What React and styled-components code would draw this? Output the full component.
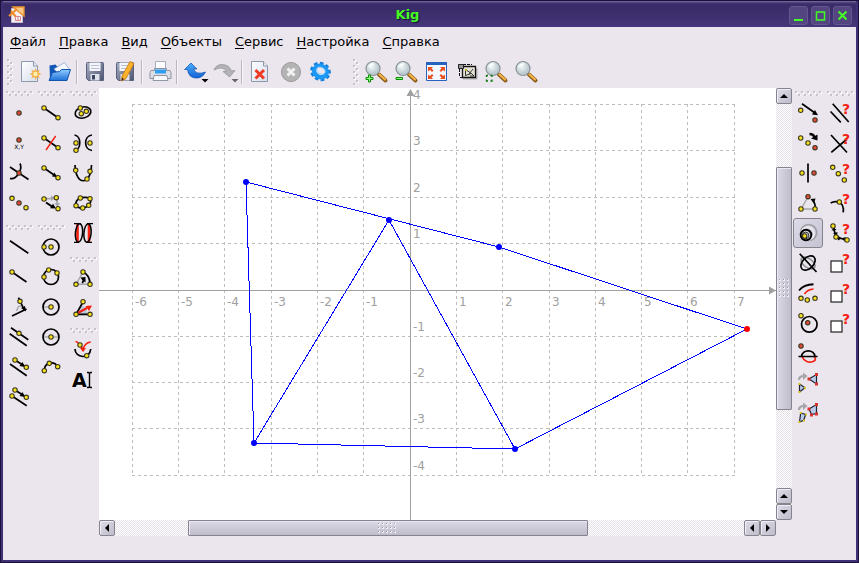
import styled, { createGlobalStyle, css } from "styled-components";

const GlobalStyle = createGlobalStyle`
  * {
    box-sizing: border-box;
  }

  body {
    margin: 0;
    background: #1c1038;
    font-family: "DejaVu Sans", Verdana, sans-serif;
    font-size: 13px;
    color: #000;
  }

  button {
    font: inherit;
    color: inherit;
    padding: 0;
    border: none;
    background: none;
  }
`;

const Window = styled.div`
  min-height: 100vh;
  display: flex;
  flex-direction: column;
  background: #ebe6ed;
  border: 3px solid #3f3176;
  border-top: none;
  outline: 1px solid #1c1038;
  outline-offset: -1px;
`;

const TitleBar = styled.header`
  height: 27px;
  flex: none;
  display: flex;
  align-items: center;
  padding: 2px 4px 0 5px;
  border-top: 1px solid #1c1038;
  background: linear-gradient(#8478ac 0, #574a86 1px, #3a2c68 3px, #3a2c68 8px, #45377b 100%);
`;

const Title = styled.h1`
  flex: 1;
  margin: 0;
  text-align: center;
  font-size: 13px;
  line-height: 20px;
  color: #44ff22;
  text-shadow: 1px 1px 1px #1c1038;
`;

const WindowButtons = styled.div`
  display: flex;
  gap: 3px;
`;

const WindowButton = styled.button`
  width: 19px;
  height: 19px;
  display: flex;
  border-radius: 3px;
  background: #534580;
  border: 1px solid #64578f;
`;

const MenuBar = styled.nav`
  height: 29px;
  flex: none;
  display: flex;
  align-items: center;
  gap: 1px;
  padding-left: 1px;
`;

const MenuItem = styled.button`
  padding: 0 6px;
  line-height: 20px;

  u {
    text-underline-offset: 2px;
    text-decoration-thickness: 1px;
  }
`;

const Toolbar = styled.div`
  height: 32px;
  flex: none;
  display: flex;
  align-items: center;
`;

const bumps = css`
  background-image: conic-gradient(from 0deg at 2px 2px, transparent 75%, #c6c2c9 0),
    conic-gradient(from 0deg at 2px 2px, transparent 75%, #c6c2c9 0),
    conic-gradient(from 0deg at 2px 2px, transparent 75%, #fff 0),
    conic-gradient(from 0deg at 2px 2px, transparent 75%, #fff 0);
  background-size: 6px 6px;
  background-position: 0 0, 3px 3px, 1px 1px, 4px 4px;
`;

const VerticalHandle = styled.div`
  width: 6px;
  height: 26px;
  margin: 0 2px 0 ${(props) => (props.$spaced ? "18px" : "4px")};
  ${bumps}
`;

const HorizontalHandle = styled.div`
  width: 27px;
  height: 5px;
  margin: 3px 0 2px 3px;
  ${bumps}
`;

const Separator = styled.div`
  width: 2px;
  height: 24px;
  margin: 0 2px 0 1px;
  border-left: 1px solid #b9b6bf;
  border-right: 1px solid #f8f6fa;
`;

const ActionButton = styled.button`
  width: 30px;
  height: 30px;
  display: flex;
  align-items: center;
  justify-content: center;
`;

const Workspace = styled.main`
  flex: 1;
  display: flex;
  padding-bottom: 24px;
`;

const Palette = styled.div`
  width: 32px;
  flex: none;
`;

const ToolGroup = styled.div`
  display: flex;
  flex-direction: column;

  &:not(:first-child) {
    padding-top: ${(props) => props.$gap || 4}px;
  }
`;

const ToolButton = styled.button`
  width: 30px;
  height: 30px;
  margin-left: 1px;
  display: flex;
  align-items: center;
  justify-content: center;
  border-radius: 3px;

  ${(props) =>
    props.$active &&
    css`
      border: 1px solid #85838d;
      background: linear-gradient(135deg, #dddbe8, #c5c3d2);
    `}
`;

const View = styled.div`
  flex: 1;
  min-width: 0;
  display: grid;
  grid-template-columns: 1fr 16px;
  grid-template-rows: 1fr 16px;
`;

const Drawing = styled.svg`
  display: block;
  width: 100%;
  height: 100%;
  background: #fff;
  font-size: 12px;
`;

const ScrollBar = styled.div`
  display: flex;
  flex-direction: ${(props) => (props.$vertical ? "column" : "row")};
  background: repeating-conic-gradient(#fff 0 25%, #e6e1e8 0 50%) 0 0 / 2px 2px;
`;

const ScrollSpace = styled.div`
  flex: ${(props) => props.$size} 1 0;
`;

const ScrollThumb = styled.div`
  flex: ${(props) => props.$size} 1 0;
  display: flex;
  align-items: center;
  justify-content: center;
  border: 1px solid #85838d;
  border-radius: 1px;
  box-shadow: inset 1px 1px #eae8f2;
  background: linear-gradient(${(props) => (props.$vertical ? "to right" : "to bottom")}, #dcdae6, #bfbccb);
`;

const Grip = styled.div`
  width: ${(props) => (props.$vertical ? 11 : 19)}px;
  height: ${(props) => (props.$vertical ? 19 : 11)}px;
  background: conic-gradient(from 0deg at 1px 1px, transparent 75%, #9c9aa6 0) 0 0 / 4px 4px,
    conic-gradient(from 0deg at 2px 2px, transparent 75%, #f0eff6 0) 0 0 / 4px 4px;
`;

const ScrollButton = styled.button`
  width: 16px;
  height: 16px;
  flex: none;
  display: flex;
  border: 1px solid #85838d;
  border-radius: 2px;
  box-shadow: inset 1px 1px #f0eef6;
  background: linear-gradient(135deg, #dedce8, #bfbccb);
`;

const RED = "#e0483a";
const YELLOW = "#f7e21c";

const Dot = ({ x, y, red }) => (
  <circle cx={x} cy={y} r="2.2" fill={red ? RED : YELLOW} stroke="#3b3820" strokeWidth="1.1" />
);

const Line = ({ d, color = "#000", w = 1.7 }) => (
  <path d={d} fill="none" stroke={color} strokeWidth={w} />
);

const Question = () => (
  <text x="14" y="13" fontSize="14" fontWeight="bold" fill="#f5200f">
    ?
  </text>
);

const toolIcons = {
  point: <Dot x={12} y={12} red />,
  coordinates: (
    <>
      <Dot x={12} y={9} red />
      <text x="12" y="18" fontSize="6" textAnchor="middle">
        X,Y
      </text>
    </>
  ),
  intersection: (
    <>
      <Line d="M3 6l18.5 12.5M13 2.5c1.5 3 1 6-1 9.5s-5 6.5-9 5.5" />
      <Dot x={12} y={12} red />
    </>
  ),
  midpoint: (
    <>
      <Dot x={5} y={7.3} />
      <Dot x={12} y={12} red />
      <Dot x={19} y={16.7} />
    </>
  ),
  segment: (
    <>
      <Line d="M5 7l14 9.7" />
      <Dot x={5} y={7} />
      <Dot x={19} y={16.7} />
    </>
  ),
  bisector: (
    <>
      <Line d="M5 7l14 9.7" />
      <Line d="M16.7 5L7 19" color="#f5200f" w={1.4} />
      <Dot x={5} y={7} />
      <Dot x={19} y={16.7} />
    </>
  ),
  vector: (
    <>
      <Line d="M5 7l14 9.7" />
      <path d="M18 16l-5-.5 2.500-4z" />
      <Dot x={5} y={7} />
      <Dot x={19} y={16.7} />
    </>
  ),
  vectorSum: (
    <>
      <Line d="M5 8l8-.6M17.500 7l1 7" color="#a5a5ab" />
      <path d="M12 4.500l4 2.500-4 3zM15.500 12h5.500l-2.500 4z" fill="#a5a5ab" />
      <Line d="M7 11.500l6 4" w={2} />
      <path d="M17 17.500l-6-.3 3-4.500z" />
      <Dot x={5} y={8} />
      <Dot x={17.3} y={6.7} />
      <Dot x={19} y={17.7} />
    </>
  ),
  ellipse: (
    <>
      <ellipse cx="12" cy="11.5" rx="8" ry="5.5" transform="rotate(-16 12 11.5)" fill="none" stroke="#000" strokeWidth="1.7" />
      <Dot x={9.3} y={7} />
      <Dot x={10.3} y={12.7} />
      <Dot x={15.3} y={10.3} />
    </>
  ),
  hyperbola: (
    <>
      <Line d="M3.500 4c7 1 7 14.500 0 15.500M21 4c-8.500 1-8.500 14.500 0 15.500" />
      <Dot x={5} y={12} />
      <Dot x={19} y={12} />
      <Dot x={5} y={19.3} />
    </>
  ),
  parabola: (
    <>
      <Line d="M4 4c.5 21 16 21 16.500 0" />
      <Dot x={4.7} y={9.3} />
      <Dot x={19} y={10.3} />
      <Dot x={16} y={18} />
    </>
  ),
  conic: (
    <>
      <Line d="M9.300 7c3-1 8-1 9.700.7 1.500 2 0 5-1.300 6.600-2 1.700-4 2.700-6 2.700-3 0-6 0-7-2.300C4 12 6 8 9.300 7z" />
      <Dot x={9.3} y={7} />
      <Dot x={19} y={7.7} />
      <Dot x={5} y={14.7} />
      <Dot x={11.7} y={17} />
      <Dot x={17.7} y={14.3} />
    </>
  ),
  cubic: (
    <>
      <Line d="M6.500 3v18M18 3v18" color="#f5200f" w={2.6} />
      <ellipse cx="8" cy="12" rx="3.6" ry="9.3" transform="rotate(5 8 12)" fill="none" stroke="#000" strokeWidth="1.5" />
      <ellipse cx="16.5" cy="12" rx="3.6" ry="9.3" transform="rotate(5 16.5 12)" fill="none" stroke="#000" strokeWidth="1.5" />
      <Line d="M3 2.700h7M16 2.700h6M3 21.300h5M15 21.300h6" w={1.3} />
    </>
  ),
  line: <Line d="M3 5.700l18.300 12.600" />,
  ray: (
    <>
      <Line d="M5 7l14.500 10" />
      <Dot x={5} y={7} />
    </>
  ),
  perpendicular: (
    <>
      <Line d="M9.500 16l2-4.500 4-1" color="#a5a5ab" w={1.4} />
      <Line d="M11.500 2.700L17.500 15.500M5 21l14.500-7" />
      <path d="M19 16.500l-5-3.500 4-2z" />
      <Dot x={13} y={6.3} />
    </>
  ),
  parallel: (
    <>
      <Line d="M4 2.700l17.300 12M2.700 8.700l17 12" />
      <Dot x={12} y={8.3} />
    </>
  ),
  lineByVector: (
    <>
      <Line d="M8 5l11.300 7.300M3 9l16.700 11.700" />
      <path d="M18 12l-5.500-1 3-4z" />
      <Dot x={8} y={5} />
      <Dot x={19.3} y={12.3} />
    </>
  ),
  rayByVector: (
    <>
      <Line d="M8 5l11.300 7.300M5 11l14.700 9.700" />
      <path d="M18 12l-5.500-1 3-4z" />
      <Dot x={8} y={5} />
      <Dot x={19.3} y={12.3} />
      <Dot x={5} y={11} />
    </>
  ),
  circleByPoint: (
    <>
      <circle cx="12" cy="12" r="8" fill="none" stroke="#000" strokeWidth="1.7" />
      <Dot x={12} y={12} />
      <Dot x={5} y={12} />
    </>
  ),
  circleByThree: (
    <>
      <circle cx="12" cy="12" r="7.5" fill="none" stroke="#000" strokeWidth="1.7" />
      <Dot x={9.7} y={5} />
      <Dot x={18} y={8} />
      <Dot x={5} y={12} />
    </>
  ),
  circleByRadius: (
    <>
      <Line d="M4 12h8" color="#a5a5ab" w={1.3} />
      <circle cx="12" cy="12" r="8" fill="none" stroke="#000" strokeWidth="1.7" />
      <Dot x={12} y={12} />
    </>
  ),
  circleByDiameter: (
    <>
      <Line d="M4 12h16" color="#a5a5ab" w={1.3} />
      <circle cx="12" cy="12" r="8" fill="none" stroke="#000" strokeWidth="1.7" />
      <Dot x={12} y={12} />
    </>
  ),
  arc: (
    <>
      <Line d="M5.300 15.700c0-9 10-10 13.400-4" />
      <Dot x={5.3} y={15.7} />
      <Dot x={10.3} y={8.3} />
      <Dot x={18.7} y={11.7} />
    </>
  ),
  arcByAngle: (
    <>
      <Line d="M12 5L5 17.300h14" color="#a5a5ab" w={1.4} />
      <Line d="M12 5c4.500 2 7 6 7 12.300" w={1.9} />
      <path d="M9.500 10.500l5-.5v5.500l-1.500-1-1 2-1.500-.7 1-2.300z" />
      <Dot x={12} y={5} />
      <Dot x={5} y={17.3} />
      <Dot x={19} y={17.3} />
    </>
  ),
  angle: (
    <>
      <path d="M5 17l5-9c4 1 6 4 6 9z" fill="#b9c6dc" />
      <Line d="M12 5L5 17.300h14" />
      <Line d="M5 17l11-6" color="#f5200f" w={2} />
      <path d="M21 8.500l-3 5.500-3.500-5z" fill="#f5200f" />
      <Dot x={12} y={4.7} />
      <Dot x={5} y={17.3} />
      <Dot x={19} y={17.3} />
    </>
  ),
  locus: (
    <>
      <Line d="M4.500 3.500c3 0 5 4 7.500 8 1-4 4-7 7.700-7.500" color="#f5200f" />
      <path d="M9 10h6l-3 4z" fill="#f5200f" />
      <Line d="M4 11c0 9.500 15 10.500 15.700 0" />
      <Dot x={9} y={7} />
      <Dot x={15.7} y={17.7} />
    </>
  ),
  label: (
    <>
      <text x="1" y="19" fontSize="19" fontWeight="bold">
        A
      </text>
      <Line d="M16 4.500h1.500l1 1 1-1H21M16 19.500h1.500l1-1 1 1H21M18.500 5v14" w={1.4} />
    </>
  ),
  translate: (
    <>
      <Line d="M6 2.700l13 9.300" />
      <path d="M22 14.300l-6-.8 3-4.500z" />
      <Dot x={4.7} y={9.3} />
      <Dot x={19} y={19} red />
    </>
  ),
  pointReflection: (
    <>
      <Line d="M13.500 3q4 0 5 3" w={2.5} />
      <path d="M21.500 3.500v6l-6.500-2z" />
      <Dot x={4.7} y={7} />
      <Dot x={12} y={12} />
      <Dot x={19} y={16.7} red />
    </>
  ),
  lineReflection: (
    <>
      <Line d="M12 2.500v19" />
      <Dot x={6} y={12} />
      <Dot x={18} y={12} red />
    </>
  ),
  rotate: (
    <>
      <Line d="M12 6L5 18h14" color="#a5a5ab" w={1.4} />
      <Line d="M19 18q1-5-2-8" />
      <path d="M14.500 8l5-.5-1.500 5z" />
      <Dot x={12} y={5.7} red />
      <Dot x={5} y={18} />
      <Dot x={19} y={18} />
    </>
  ),
  scale: (
    <>
      <circle cx="12.7" cy="11.5" r="8" fill="none" stroke="#9d9da3" strokeWidth="1.6" />
      <circle cx="11.5" cy="12.7" r="6.5" fill="none" stroke="#f1f0f5" strokeWidth="1.4" />
      <circle cx="10" cy="14" r="5.3" fill="none" stroke="#000" strokeWidth="1.9" />
      <circle cx="9.5" cy="14.5" r="3.3" fill="none" stroke="#333" strokeWidth="1" />
      <Dot x={8.7} y={15} />
    </>
  ),
  similitude: (
    <>
      <ellipse cx="12" cy="12" rx="8" ry="4.5" transform="rotate(35 12 12)" fill="none" stroke="#8f9196" strokeWidth="1.6" />
      <ellipse cx="12" cy="12" rx="8.5" ry="5.5" transform="rotate(-45 12 12)" fill="none" stroke="#000" strokeWidth="1.7" />
      <Line d="M3.700 2.700L20.500 21" />
    </>
  ),
  harmonic: (
    <>
      <Line d="M3 9.500Q8 3.500 17.500 3.300" w={1.9} />
      <Line d="M8.500 13q3-4.500 9-5" color="#f5200f" />
      <Dot x={5} y={17.3} />
      <Dot x={11.3} y={19} />
      <Dot x={19} y={17.3} />
    </>
  ),
  inversion: (
    <>
      <circle cx="13.3" cy="13.3" r="7.8" fill="none" stroke="#000" strokeWidth="1.7" />
      <Dot x={5} y={4.7} />
      <Dot x={11.7} y={11.7} red />
    </>
  ),
  affinity: (
    <>
      <Line d="M6 15.500c2 5 7 6.500 11 5 3-1 3-3 1-5" color="#f5200f" />
      <Line d="M2.500 15.500h19M5.500 15.500c1-7.500 12.500-7.500 13.500 0" />
      <Dot x={5} y={5} red />
    </>
  ),
  projectTriangle: (
    <>
      <Line d="M3 9q0-4 5-4" color="#a5a5ab" w={2.2} />
      <path d="M7 1.500l4.500 3.500L7 9z" fill="#a5a5ab" />
      <path d="M13 8l7.500-4.500v9.500zM3.500 13l5.500 3.700L3.500 21z" fill="#b8cbe8" stroke="#223" strokeWidth="1.2" />
      <path d="M11.500 6.500h3v3h-3zM19 2h3v3h-3zM19 11.500h3v3h-3z" fill="#d8322a" />
      <path d="M2.500 12h2v2h-2zM8 15.700h2v2H8zM2.500 20h2v2h-2z" fill="#d6c61a" />
    </>
  ),
  projectQuad: (
    <>
      <Line d="M3 9q0-4 5-4" color="#a5a5ab" w={2.2} />
      <path d="M7 1.500l4.500 3.500L7 9z" fill="#a5a5ab" />
      <path d="M13 8l7.500-4.500v9l-5 1zM4.700 12l5 1.300-2 6L3.500 21z" fill="#b8cbe8" stroke="#223" strokeWidth="1.2" />
      <path d="M11.500 6.500h3v3h-3zM19 2h3v3h-3zM19 11.500h3v3h-3zM14 12.500h3v3h-3z" fill="#d8322a" />
      <path d="M3.700 11h2v2h-2zM9 12.500h2v2H9zM7 18.500h2v2H7zM2.500 20h2v2h-2z" fill="#d6c61a" />
    </>
  ),
  testParallel: (
    <>
      <Line d="M4.700 2.700L20.700 21M2.500 10.500l10.300 10.800" />
      <Question />
    </>
  ),
  testOrthogonal: (
    <>
      <Line d="M3 4l16 17.500M3.300 21.300L19 8" />
      <Question />
    </>
  ),
  testCollinear: (
    <>
      <Dot x={4.7} y={6.3} />
      <Dot x={10.3} y={12.7} />
      <Dot x={16.3} y={19} />
      <Question />
    </>
  ),
  testContains: (
    <>
      <Line d="M2.700 12c4-2.500 14-2.500 12.500 9.300" />
      <Dot x={11.3} y={11} />
      <Question />
    </>
  ),
  testDistance: (
    <>
      <Line d="M5 5l3 11 11 3" />
      <path d="M3.500 9.500l2.500-3 2.500 2.500zM5 12.500l4.500-1.500-.5 4zM10 14.500v5l3.500-2zM17.500 16v5l-4-3.500z" />
      <Dot x={5} y={5} />
      <Dot x={8} y={16} />
      <Dot x={19} y={19} />
      <Question />
    </>
  ),
  testBox: (
    <>
      <rect x="3" y="10" width="11" height="11" fill="#fff" stroke="#222" strokeWidth="1.2" />
      <Question />
    </>
  ),
};

const leftPalettes = [
  [
    { tools: ["point", "coordinates", "intersection", "midpoint"] },
    { tools: ["line", "ray", "perpendicular", "parallel", "lineByVector", "rayByVector"] },
  ],
  [
    { tools: ["segment", "bisector", "vector", "vectorSum"] },
    { tools: ["circleByPoint", "circleByThree", "circleByRadius", "circleByDiameter", "arc"] },
  ],
  [
    { tools: ["ellipse", "hyperbola", "parabola", "conic", "cubic"] },
    { gap: 6, tools: ["arcByAngle", "angle"] },
    { gap: 1, tools: ["locus", "label"] },
  ],
];

const rightPalettes = [
  [
    {
      tools: [
        "translate",
        "pointReflection",
        "lineReflection",
        "rotate",
        "scale",
        "similitude",
        "harmonic",
        "inversion",
        "affinity",
        "projectTriangle",
        "projectQuad",
      ],
    },
  ],
  [
    {
      tools: [
        "testParallel",
        "testOrthogonal",
        "testCollinear",
        "testContains",
        "testDistance",
        "testBox",
        "testBox",
        "testBox",
      ],
    },
  ],
];

const Page = () => (
  <path d="M3.500 1.500h12l4 4.500v15.500h-16z" fill="url(#paper)" stroke="#8e98ab" />
);

const Lens = () => (
  <>
    <path d="M15 14.500l6.500 6" stroke="#8a5a18" strokeWidth="4" strokeLinecap="round" />
    <path d="M15.500 14.500l5.500 5" stroke="#f3b54a" strokeWidth="2.2" strokeLinecap="round" />
    <circle cx="9" cy="8.5" r="7" fill="url(#glass)" stroke="#8a9299" strokeWidth="1.2" />
    <path d="M5 7q1.500-3.500 5-3" fill="none" stroke="#fff" strokeWidth="1.5" />
  </>
);

const Floppy = () => (
  <>
    <path d="M3.500 3.500q0-1 1-1h15q1 0 1 1v17h-15l-2-2z" fill="url(#steel)" stroke="#59627c" />
    <path d="M6.500 2.500h11v8.500h-11z" fill="#f3f5fa" />
    <path d="M8 5.500h8M8 8.500h8" stroke="#b9c2d4" />
    <path d="M7.500 14h9v6.500h-9z" fill="#dfe2ea" />
    <path d="M9 15h3v4.500H9z" fill="#3c4560" />
  </>
);

const actionIcons = {
  new: (
    <>
      <Page />
      <path d="M15.500 1.500V6h4" fill="#e6eaf2" stroke="#8e98ab" />
      <path d="M17.500 8l1.200 3 3-1.200-1.200 3 3 1.200-3 1.200 1.200 3-3-1.200-1.200 3-1.200-3-3 1.200 1.200-3-3-1.200 3-1.200-1.200-3 3 1.200z" fill="#f3b04a" />
      <circle cx="17.5" cy="14" r="2.2" fill="#fff1a8" />
    </>
  ),
  open: (
    <>
      <path d="M1.500 5.500l6-1 1.500 2h10v14h-17z" fill="#1257b5" />
      <path d="M6 9L16.500 2.500l5 7-9 6z" fill="#f4f8ff" stroke="#8fa7cc" strokeWidth=".8" />
      <path d="M1 20.500l3.500-8 7-1 2-2h9l-3.500 11z" fill="url(#folder)" stroke="#1156ac" />
    </>
  ),
  save: <Floppy />,
  saveAs: (
    <>
      <Floppy />
      <path d="M17 1.500l4 2-8 15-4.500 2.500.5-5z" fill="#fbb32c" stroke="#c9761b" strokeWidth=".8" />
      <path d="M9 17.500l2 1.500-2.500 2z" fill="#3a2a18" />
    </>
  ),
  print: (
    <>
      <path d="M7.500 1.500h10v9h-10z" fill="#fdfdff" stroke="#a4aebd" />
      <path d="M3 10.500h3.500v-2h12v2H22l1 2v6H2v-6z" fill="#dcdfe6" stroke="#8d929e" />
      <path d="M7 9.500h11v4H7z" fill="#2f9df2" />
      <path d="M6 15.500h13l1 5H5z" fill="#f7f8fb" stroke="#9298a4" />
    </>
  ),
  undo: (
    <>
      <path d="M1.500 9.500L8 3l6 6h-3.500q2.500 6.500 12 3-3 6.500-10 6-7-.5-8-8.500z" fill="url(#blue)" stroke="#0d4fae" strokeWidth=".7" />
      <path d="M18.500 19h7L22 22.500z" />
    </>
  ),
  redo: (
    <>
      <path d="M22 10.500L16.500 17 10 11.500l3.500-.5Q9.500 5.500 1 10q2-5.500 8-5.500 7 0 9.500 6.500z" fill="#b3b2b6" stroke="#8f8e94" strokeWidth=".7" />
      <path d="M18.500 19h7L22 22.500z" fill="#66656a" />
    </>
  ),
  closePage: (
    <>
      <Page />
      <path d="M15.500 1.500V6h4" fill="#e6eaf2" stroke="#8e98ab" />
      <path d="M7.500 10l8.500 8.500M16 10l-8.500 8.500" stroke="#ee3a24" strokeWidth="3" />
    </>
  ),
  stop: (
    <>
      <circle cx="13" cy="12" r="9.5" fill="#b4b4b4" stroke="#999" />
      <path d="M9.500 8.500l7 7M16.500 8.500l-7 7" stroke="#f2f2f2" strokeWidth="3" />
    </>
  ),
  gear: (
    <g transform="rotate(25 12.5 11.5)">
      <ellipse cx="12.500" cy="11.5" rx="8.5" ry="7.5" fill="none" stroke="#1480dc" strokeWidth="4" strokeDasharray="3.400 2.200" />
      <ellipse cx="12.500" cy="11.5" rx="6.500" ry="5.5" fill="none" stroke="#1b98f3" strokeWidth="4.400" />
      <ellipse cx="12.500" cy="10.500" rx="4.500" ry="3.200" fill="#ebe6ed" stroke="#83c8fb" strokeWidth=".8" />
    </g>
  ),
  zoomIn: (
    <>
      <Lens />
      <path d="M4.500 15h2v2.500H9v2H6.500V22h-2v-2.500H2v-2h2.500z" fill="#8dff72" stroke="#0a8a0a" />
    </>
  ),
  zoomOut: (
    <>
      <Lens />
      <path d="M2 17.500h6.500v2H2z" fill="#8dff72" stroke="#0a8a0a" />
    </>
  ),
  fit: (
    <>
      <path d="M2.500 2.500h20v18h-20z" fill="#f5f8ff" stroke="#2862bf" />
      <path d="M2 2h21v3H2z" fill="#2862bf" />
      <path d="M4 7h5L7.500 8.500l2 2L8 12l-2-2-2 1.500zM21 7h-5l1.500 1.500-2 2L17 12l2-2 2 1.500zM4 19h5l-1.500-1.500 2-2L8 14l-2 2-2-1.500zM21 19h-5l1.500-1.500-2-2L17 14l2 2 2-1.500z" fill="#e9501f" />
    </>
  ),
  area: (
    <>
      <path d="M9 4.500h9M5.500 9v7M6 17.500h2" fill="none" stroke="#111" strokeDasharray="3 1" />
      <path d="M8.500 6.500h13v11h-13z" fill="#e6e3d4" stroke="#111" strokeWidth="1.3" />
      <path d="M9 18.800h13.800V8" fill="none" stroke="#8b8b8b" />
      <path d="M11.500 15.500v-6l6 4zM15 14l4-5M17 13l3 3h-4" fill="none" stroke="#333" />
      <path d="M4.500 4.500h5v4h-5z" fill="#999" stroke="#222" />
      <circle cx="12" cy="10" r="1" fill="#d6c61a" />
    </>
  ),
  zoomArea: (
    <>
      <Lens />
      <path d="M2.500 17v-1.500H4M6.500 15.500H8V17M8 19.500V21H6.500M4 21H2.500v-1.500" fill="none" stroke="#0a7a0a" strokeWidth="1.3" />
    </>
  ),
  find: <Lens />,
};

const actions = [
  ["new", "open"],
  ["save", "saveAs"],
  ["print"],
  ["undo", "redo"],
  ["closePage", "stop", "gear"],
];

const zoomActions = ["zoomIn", "zoomOut", "fit", "area", "zoomArea", "find"];

const menu = ["Файл", "Правка", "Вид", "Объекты", "Сервис", "Настройка", "Справка"];

const Gradients = () => (
  <svg width="0" height="0" display="block" aria-hidden="true">
    <defs>
      <linearGradient id="paper" x1="0" y1="0" x2="1" y2="1">
        <stop offset="0" stopColor="#fff" />
        <stop offset="1" stopColor="#d5dceb" />
      </linearGradient>
      <linearGradient id="folder" x1="0" y1="0" x2="0" y2="1">
        <stop offset="0" stopColor="#8fcbff" />
        <stop offset="1" stopColor="#1f72d8" />
      </linearGradient>
      <linearGradient id="steel" x1="0" y1="0" x2="1" y2="1">
        <stop offset="0" stopColor="#a9b1c6" />
        <stop offset="1" stopColor="#4b5470" />
      </linearGradient>
      <linearGradient id="blue" x1="0" y1="0" x2="0" y2="1">
        <stop offset="0" stopColor="#49aefb" />
        <stop offset="1" stopColor="#1262d6" />
      </linearGradient>
      <radialGradient id="glass" cx=".4" cy=".35">
        <stop offset="0" stopColor="#f4fafb" />
        <stop offset="1" stopColor="#bccbd0" />
      </radialGradient>
    </defs>
  </svg>
);

const AppIcon = () => (
  <svg width="18" height="18" viewBox="0 0 18 18" aria-hidden="true">
    <path d="M3.500 2.500h11v14h-11z" fill="#f4eff2" stroke="#c9bfd0" />
    <path d="M5 1h11v9z" fill="#f9c987" stroke="#e8922c" strokeWidth="1.4" />
    <path d="M1 10l8-7M3 5l5 6" stroke="#ef8f2b" strokeWidth="2.2" />
    <path d="M7.500 10.500h5v4h-5zM10 10.500v4" fill="none" stroke="#d9868a" />
  </svg>
);

const Action = ({ name }) => (
  <ActionButton aria-label={name}>
    <svg width="24" height="24" viewBox="0 0 24 24" overflow="visible" fill="#000">
      {actionIcons[name]}
    </svg>
  </ActionButton>
);

const PaletteColumn = ({ groups }) => (
  <Palette>
    {groups.map((group, i) => (
      <ToolGroup key={i} $gap={group.gap}>
        <HorizontalHandle />
        {group.tools.map((name, j) => (
          <ToolButton key={j} aria-label={name} $active={name === "scale"}>
            <svg width="24" height="24" viewBox="0 0 24 24" overflow="visible">
              {toolIcons[name]}
            </svg>
          </ToolButton>
        ))}
      </ToolGroup>
    ))}
  </Palette>
);

const arrowPaths = {
  up: "M3 9l4-4 4 4z",
  down: "M3 5h8l-4 4z",
  left: "M9 3v8L5 7z",
  right: "M5 3v8l4-4z",
};

const Arrow = ({ to }) => (
  <ScrollButton aria-label={`Scroll ${to}`}>
    <svg width="14" height="14" viewBox="0 0 14 14">
      <path d={arrowPaths[to]} />
    </svg>
  </ScrollButton>
);

// Origin and size of one unit in the drawing
const ORIGIN = { x: 311.01, y: 201.95 };
const UNIT = 46.33;

const toX = (n) => Math.floor(ORIGIN.x + n * UNIT);
const toY = (n) => Math.floor(ORIGIN.y - n * UNIT);
const range = (from, to) => Array.from({ length: to - from + 1 }, (_, i) => from + i);

const columns = range(-6, 7).filter((n) => n !== 0);
const rows = range(-4, 4).filter((n) => n !== 0);

const points = [
  { x: 147, y: 94 },
  { x: 290, y: 132 },
  { x: 400, y: 159 },
  { x: 416, y: 361 },
  { x: 155, y: 355 },
  { x: 648, y: 241, selected: true },
];

const GeometryView = () => (
  <Drawing viewBox="0 0 677 432" preserveAspectRatio="xMidYMid slice">
    <g stroke="#bdbdbd" strokeDasharray="3 3" shapeRendering="crispEdges">
      {columns.map((n) => (
        <path key={n} d={`M${toX(n) + 0.5} ${toY(4)}V${toY(-4) + 1}`} />
      ))}
      {rows.map((n) => (
        <path key={n} d={`M${toX(-6)} ${toY(n) + 0.5}H${toX(7) + 1}`} />
      ))}
    </g>
    <path d="M0 202.500H677M311.500 2V432" stroke="#a0a0a0" shapeRendering="crispEdges" />
    <path d="M311.500 1l4 7h-8zM677 202.500l-7-4v8z" fill="#a0a0a0" />
    <g fill="#a0a0a0">
      {columns.map((n) => (
        <text key={n} x={toX(n) + 3} y="218">
          {n}
        </text>
      ))}
      {rows.map((n) => (
        <text key={n} x="314" y={toY(n) - 5}>
          {n}
        </text>
      ))}
    </g>
    <path
      d="M147 94L400 159 648 241 416 361 155 355zM155 355L290 132 416 361"
      fill="none"
      stroke="#00f"
      shapeRendering="crispEdges"
    />
    {points.map((p) => (
      <circle key={p.x} cx={p.x} cy={p.y} r="3" fill={p.selected ? "#f00" : "#00f"} />
    ))}
  </Drawing>
);

const App = () => {
  return (
    <Window>
      <GlobalStyle />
      <TitleBar>
        <AppIcon />
        <Title>Kig</Title>
        <WindowButtons>
          <WindowButton aria-label="Minimize">
            <svg width="17" height="17" viewBox="0 0 17 17">
              <path d="M4 13h9" stroke="#4f2" strokeWidth="2" />
            </svg>
          </WindowButton>
          <WindowButton aria-label="Maximize">
            <svg width="17" height="17" viewBox="0 0 17 17">
              <path d="M4.500 5h8v8h-8z" fill="none" stroke="#4f2" strokeWidth="1.5" />
            </svg>
          </WindowButton>
          <WindowButton aria-label="Close">
            <svg width="17" height="17" viewBox="0 0 17 17">
              <path d="M4.500 4.500l8 8M12.500 4.500l-8 8" stroke="#4f2" strokeWidth="2" />
            </svg>
          </WindowButton>
        </WindowButtons>
      </TitleBar>

      <MenuBar>
        {menu.map((item) => (
          <MenuItem key={item}>
            <u>{item[0]}</u>
            {item.slice(1)}
          </MenuItem>
        ))}
      </MenuBar>

      <Toolbar>
        <VerticalHandle />
        {actions.map((group, i) => [
          i > 0 && <Separator key={i} />,
          ...group.map((name) => <Action key={name} name={name} />),
        ])}
        <VerticalHandle $spaced />
        {zoomActions.map((name) => (
          <Action key={name} name={name} />
        ))}
      </Toolbar>

      <Workspace>
        {leftPalettes.map((groups, i) => (
          <PaletteColumn key={i} groups={groups} />
        ))}
        <View>
          <GeometryView />
          <ScrollBar $vertical>
            <Arrow to="up" />
            <ScrollSpace $size={63} />
            <ScrollThumb $size={243} $vertical>
              <Grip $vertical />
            </ScrollThumb>
            <ScrollSpace $size={78} />
            <Arrow to="up" />
            <Arrow to="down" />
          </ScrollBar>
          <ScrollBar>
            <Arrow to="left" />
            <ScrollSpace $size={73} />
            <ScrollThumb $size={399}>
              <Grip />
            </ScrollThumb>
            <ScrollSpace $size={157} />
            <Arrow to="left" />
            <Arrow to="right" />
          </ScrollBar>
        </View>
        {rightPalettes.map((groups, i) => (
          <PaletteColumn key={i} groups={groups} />
        ))}
      </Workspace>
      <Gradients />
    </Window>
  );
};

export default App;
